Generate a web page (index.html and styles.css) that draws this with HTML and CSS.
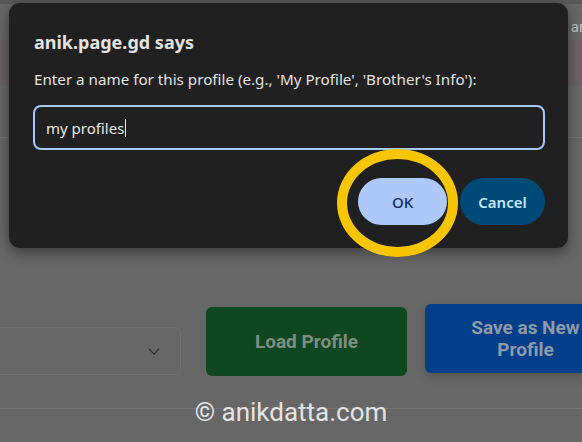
FILE: index.html
```html
<!DOCTYPE html>
<html lang="en">
<head>
    <meta charset="UTF-8">
    <meta name="viewport" content="width=device-width, initial-scale=1.0">
    <title>Profiles</title>
    <link rel="stylesheet" href="styles.css">
</head>
<body>
    <div class="page">
        <div class="strip"></div>
        <div class="top"><span class="peek">ar</span></div>
        <div class="band"></div>
        <div class="sect"></div>
        <div class="mid"></div>
        <div class="actions">
            <div class="select"><span class="chev"></span></div>
            <button class="btn load">Load Profile</button>
            <button class="btn save">Save as New<br>Profile</button>
        </div>
        <div class="foot"></div>
    </div>

    <div class="watermark">© anikdatta.com</div>

    <div class="dialog">
        <div class="title">anik.page.gd says</div>
        <div class="msg">Enter a name for this profile (e.g., 'My Profile', 'Brother's Info'):</div>
        <div class="field">my profiles<span class="caret"></span></div>
        <div class="buttons">
            <button class="dbtn ok">OK</button>
            <button class="dbtn cancel">Cancel</button>
        </div>
    </div>

    <div class="ring"></div>
</body>
</html>
```

FILE: styles.css
```css
html, body{
    margin: 0;
    padding: 0;
}
body{
    width: 582px;
    height: 442px;
    overflow: hidden;
    background-color: #676767;
    font-family: "Noto Sans", "Open Sans", sans-serif;
    position: relative;
}

/* dimmed page behind the prompt */
.page{
    display: flex;
    flex-direction: column;
}
.strip{
    height: 4px;
    background-color: #595959;
}
.top{
    height: 36px;
    display: flex;
    justify-content: flex-end;
    overflow: hidden;
}
.peek{
    font-family: Roboto, sans-serif;
    font-size: 15px;
    color: #c4c4c4;
    margin-top: 14px;
    margin-right: -2px;
}
.band{
    height: 46px;
    background-color: #6a6266;
}
.sect{
    height: 51px;
    border-bottom: 1px solid #737373;
}
.mid{
    height: 166px;
}
.actions{
    display: flex;
    align-items: flex-start;
    height: 104px;
}
.select{
    flex-shrink: 0;
    margin-top: 23px;
    margin-left: -120px;
    width: 299px;
    height: 46px;
    border: 1px solid #717171;
    border-radius: 6px;
    position: relative;
}
.chev{
    position: absolute;
    right: 22px;
    top: 17px;
    width: 7px;
    height: 7px;
    border-right: 1.6px solid #2a2a2a;
    border-bottom: 1.6px solid #2a2a2a;
    transform: rotate(45deg);
}
.btn{
    border: none;
    border-radius: 6px;
    width: 201px;
    font-family: Roboto, "Liberation Sans", sans-serif;
    font-weight: 700;
    font-size: 19px;
    line-height: 22px;
    flex-shrink: 0;
}
.load{
    margin-top: 3px;
    margin-left: 25px;
    height: 69px;
    background-color: #0f4720;
    color: #7e8f80;
}
.save{
    margin-left: 18px;
    height: 69px;
    background-color: #033e89;
    color: #8e99ab;
    box-shadow: 0 4px 10px rgba(0,0,0,0.15);
}
.foot{
    border-top: 1px solid #747474;
}
.watermark{
    position: absolute;
    left: 0;
    right: 0;
    top: 397px;
    text-align: center;
    font-family: Roboto, sans-serif;
    font-size: 26px;
    color: #e3e3e3;
}

/* prompt */
.dialog{
    position: absolute;
    left: 9px;
    top: 3px;
    width: 559px;
    height: 245px;
    box-sizing: border-box;
    padding: 27px 23px 23px 24px;
    background-color: #202020;
    border-radius: 11px;
    box-shadow: 0 4px 14px rgba(0,0,0,0.45);
    display: flex;
    flex-direction: column;
}
.title{
    font-size: 18px;
    font-weight: 700;
    color: #e3e3e3;
    line-height: 24px;
    padding-left: 1px;
}
.msg{
    margin-top: 15px;
    font-size: 15.2px;
    color: #e3e3e3;
    line-height: 20px;
    padding-left: 1px;
}
.field{
    margin-top: 16px;
    height: 45px;
    box-sizing: border-box;
    border: 2px solid #a8c7fa;
    border-radius: 8px;
    padding: 0 11px;
    display: flex;
    align-items: center;
    font-size: 15px;
    color: #e8e8e8;
}
.caret{
    width: 1px;
    height: 18px;
    background-color: #e8e8e8;
    margin-left: 1px;
}
.buttons{
    margin-top: auto;
    display: flex;
    justify-content: flex-end;
    gap: 13px;
}
.dbtn{
    height: 47px;
    border: none;
    border-radius: 24px;
    font-family: "Noto Sans", "Open Sans", sans-serif;
    font-size: 15px;
    font-weight: 500;
}
.ok{
    width: 89px;
    background-color: #adc8f9;
    color: #0b2c62;
}
.cancel{
    width: 85px;
    background-color: #004a77;
    color: #c2e7ff;
    font-weight: 600;
}

/* highlight drawn over the screenshot */
.ring{
    position: absolute;
    left: 337px;
    top: 149px;
    width: 121px;
    height: 108px;
    box-sizing: border-box;
    border: 10px solid #f7c600;
    border-radius: 50%;
}
```
